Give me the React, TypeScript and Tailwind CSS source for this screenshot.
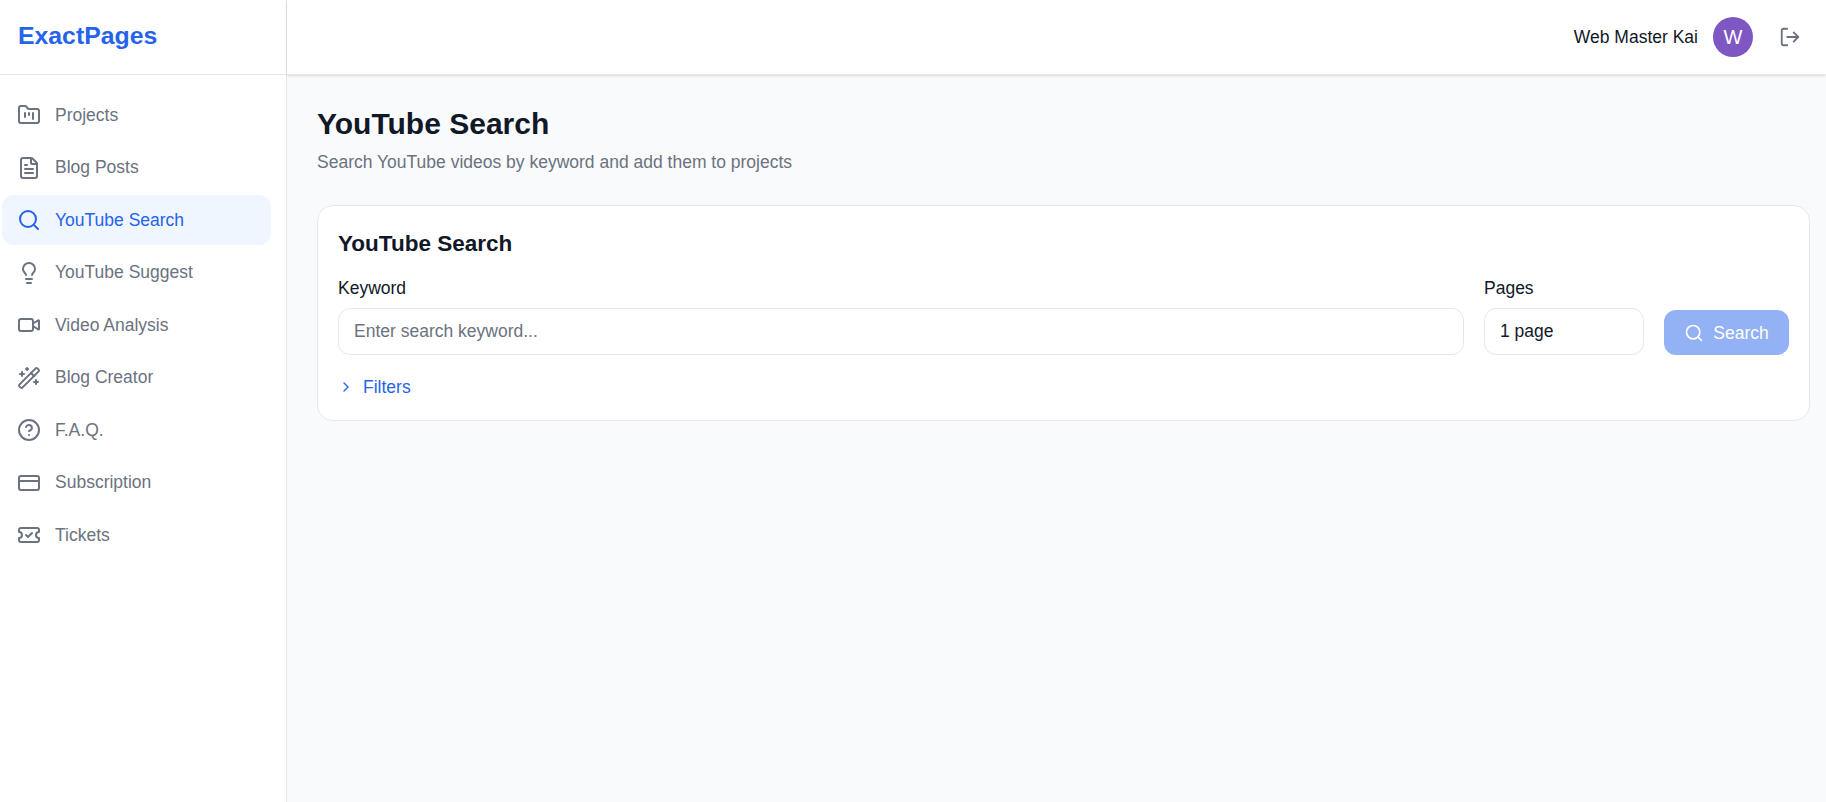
import { ChevronRight, CircleHelp, CreditCard, FileText, FolderKanban, Lightbulb, LogOut, Search, TicketCheck, Video, WandSparkles } from 'lucide-react';

const navItems = [
  { name: 'Projects', icon: FolderKanban },
  { name: 'Blog Posts', icon: FileText },
  { name: 'YouTube Search', icon: Search, active: true },
  { name: 'YouTube Suggest', icon: Lightbulb },
  { name: 'Video Analysis', icon: Video },
  { name: 'Blog Creator', icon: WandSparkles },
  { name: 'F.A.Q.', icon: CircleHelp },
  { name: 'Subscription', icon: CreditCard },
  { name: 'Tickets', icon: TicketCheck },
];

export default function App() {
  return (
    <div className="flex h-[802px] overflow-hidden bg-[#f9fafb] font-['Liberation_Sans',sans-serif] text-[#111827]">
      {/* Sidebar */}
      <aside className="w-[287px] shrink-0 bg-white border-r border-[#e5e7eb]">
        <div className="h-[75px] flex items-center px-[18px] pb-[3px] border-b border-[#e5e7eb]">
          <span className="text-[24.8px] font-bold text-[#2563eb]">ExactPages</span>
        </div>
        <nav className="flex flex-col gap-[2.5px] pt-[15px] pl-[2px] pr-[15px]">
          {navItems.map((item) => (
            <a
              key={item.name}
              className={`h-[50px] flex items-center gap-[14px] pl-[15px] rounded-xl text-[17.5px] ${
                item.active ? 'bg-[#eff6ff] text-[#2563eb]' : 'text-[#6b7280]'
              }`}
            >
              <item.icon className="h-6 w-6 shrink-0" strokeWidth={2} />
              {item.name}
            </a>
          ))}
        </nav>
      </aside>

      <div className="flex-1 flex flex-col min-w-0">
        {/* Header */}
        <header className="h-[75px] shrink-0 bg-white border-b border-[#e5e7eb] shadow-sm flex items-center justify-end pr-[25px]">
          <span className="text-[17.5px] mr-[15px]">Web Master Kai</span>
          <div className="h-10 w-10 rounded-full bg-[#7e57c2] text-white text-xl flex items-center justify-center mr-[26px]">
            W
          </div>
          <LogOut className="h-[22px] w-[22px] text-[#6b7280]" />
        </header>

        {/* Page */}
        <main className="px-[30px] pt-[31px] pr-[16px]">
          <h1 className="text-3xl leading-9 font-bold">YouTube Search</h1>
          <p className="text-[17.5px] text-[#6b7280] mt-[7px]">Search YouTube videos by keyword and add them to projects</p>

          <section className="mt-[30px] bg-white border border-[#e5e7eb] rounded-2xl px-5 pt-[21px] pb-[19px]">
            <h2 className="text-[22.5px] font-bold">YouTube Search</h2>
            <div className="flex items-end gap-5 mt-[14px]">
              <div className="flex-1">
                <label className="block text-[17.5px] mb-[7px]">Keyword</label>
                <input
                  className="w-full h-[47px] px-[15px] bg-white border border-[#e5e7eb] rounded-xl text-[17.5px] placeholder:text-[#6b7280]"
                  placeholder="Enter search keyword..."
                />
              </div>
              <div className="w-[160px]">
                <label className="block text-[17.5px] mb-[7px]">Pages</label>
                <div className="h-[47px] px-[15px] pb-[1px] flex items-center border border-[#e5e7eb] rounded-xl text-[17.5px]">1 page</div>
              </div>
              <button className="h-[45px] w-[125px] flex items-center justify-center gap-[9px] rounded-xl bg-[#93b1f5] text-white text-[17.5px] font-medium">
                <Search className="h-[20px] w-[20px]" />
                Search
              </button>
            </div>
            <div className="flex items-center gap-[9px] mt-[19px] text-[17.5px] text-[#2563eb]">
              <ChevronRight className="h-4 w-4" />
              Filters
            </div>
          </section>
        </main>
      </div>
    </div>
  );
}
